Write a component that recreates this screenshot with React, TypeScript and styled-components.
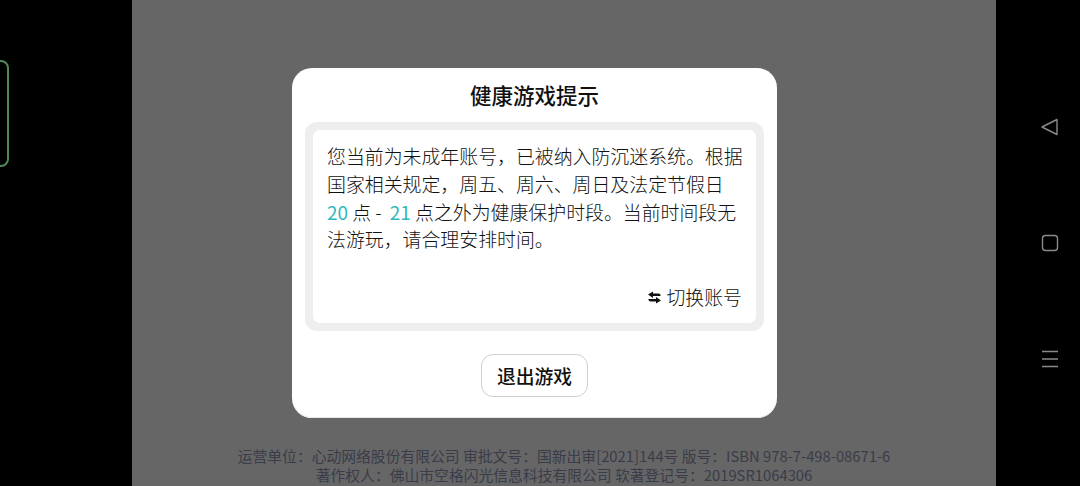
import React from 'react';
import styled, { createGlobalStyle } from 'styled-components';

const GlobalStyle = createGlobalStyle`
  html, body {
    margin: 0;
    padding: 0;
    background: #000;
    font-family: 'Noto Sans CJK SC', 'Noto Sans', sans-serif;
  }
`;

const Screen = styled.div`
  width: 1080px;
  height: 486px;
  display: flex;
  overflow: hidden;
  background: #000;
`;

const LeftRail = styled.div`
  width: 132px;
  flex-shrink: 0;
  padding-top: 60px;
  box-sizing: border-box;
  overflow: hidden;
`;

const EdgeBracket = styled.div`
  width: 19px;
  height: 107px;
  margin-left: -10px;
  box-sizing: border-box;
  border: 2px solid #4f8a55;
  border-radius: 8px;
`;

const GamePanel = styled.div`
  width: 864px;
  flex-shrink: 0;
  background: #666;
  padding-top: 68px;
  box-sizing: border-box;
`;

const Dialog = styled.div`
  width: 485px;
  height: 350px;
  margin-left: 160px;
  box-sizing: border-box;
  padding: 0 13px;
  background: #fff;
  border-radius: 20px;
  box-shadow: inset 0 -1px 1px #e6e6e6;
  display: flex;
  flex-direction: column;
  align-items: center;
`;

const Title = styled.h2`
  margin: 0;
  height: 54px;
  line-height: 54px;
  font-size: 21.5px;
  font-weight: 500;
  color: #111;
`;

const MessageFrame = styled.div`
  width: 459px;
  height: 209px;
  padding: 8px;
  box-sizing: border-box;
  background: #eeeeee;
  border-radius: 12px;
`;

const MessageCard = styled.div`
  height: 100%;
  box-sizing: border-box;
  padding: 12px 14px 12px;
  background: #fff;
  border-radius: 7px;
  display: flex;
  flex-direction: column;
  justify-content: space-between;
`;

const Message = styled.p`
  margin: 0;
  font-size: 18.9px;
  font-weight: 300;
  line-height: 27.8px;
  color: #111;
  white-space: nowrap;
`;

const Hours = styled.span`
  color: #2fb8bd;
  font-weight: 400;
`;

const SwitchAccount = styled.div`
  display: flex;
  align-items: center;
  justify-content: flex-end;
  gap: 4px;
  font-size: 18.9px;
  font-weight: 300;
  line-height: 28px;
  color: #111;
`;

const ExitButton = styled.button`
  width: 107px;
  height: 43px;
  margin-top: 23px;
  padding: 0;
  box-sizing: border-box;
  background: #fff;
  border: 1px solid #cfcfcf;
  border-radius: 12px;
  font-family: inherit;
  font-size: 18.8px;
  font-weight: 500;
  color: #111;
`;

const Footer = styled.div`
  margin-top: 28px;
  text-align: center;
  font-size: 14.8px;
  line-height: 19px;
  color: #3a3c49;
`;

const RightRail = styled.div`
  flex: 1;
  display: flex;
  flex-direction: column;
  align-items: center;
  padding: 116px 0 0 24px;
  box-sizing: border-box;
  gap: 94px;
`;

const NavIcon = styled.svg`
  width: 22px;
  height: 22px;
  fill: none;
  stroke: #8a8a8a;
  stroke-width: 1.4;
  stroke-linejoin: round;
`;

// top arrow points left, bottom arrow points right
const SwapIcon = () => (
  <svg width="15" height="15" viewBox="0 0 15 15" fill="#111">
    <path d="M1 4.6 6 1.4v2.2h5.2c1.6 0 2.4.8 2.4 2.4H6v2.1Z" />
    <path d="M14 10.4 9 13.6v-2.2H3.8C2.2 11.4 1.4 10.6 1.4 9H9V6.9Z" />
  </svg>
);

export default function App() {
  return (
    <Screen>
      <GlobalStyle />
      <LeftRail>
        <EdgeBracket />
      </LeftRail>
      <GamePanel>
        <Dialog>
          <Title>健康游戏提示</Title>
          <MessageFrame>
            <MessageCard>
              <Message>
                您当前为未成年账号，已被纳入防沉迷系统。根据
                <br />
                国家相关规定，周五、周六、周日及法定节假日
                <br />
                <Hours>20</Hours> 点 - &nbsp;<Hours>21</Hours> 点之外为健康保护时段。当前时间段无
                <br />
                法游玩，请合理安排时间。
              </Message>
              <SwitchAccount>
                <SwapIcon />
                切换账号
              </SwitchAccount>
            </MessageCard>
          </MessageFrame>
          <ExitButton>退出游戏</ExitButton>
        </Dialog>
        <Footer>
          运营单位：心动网络股份有限公司 审批文号：国新出审[2021]144号 版号：ISBN 978-7-498-08671-6
          <br />
          著作权人：佛山市空格闪光信息科技有限公司 软著登记号：2019SR1064306
        </Footer>
      </GamePanel>
      <RightRail>
        <NavIcon viewBox="0 0 22 22">
          <path d="M3 11L18 3.5V18.5Z" />
        </NavIcon>
        <NavIcon viewBox="0 0 22 22">
          <rect x="3.5" y="3.5" width="15" height="15" rx="3" />
        </NavIcon>
        <NavIcon viewBox="0 0 22 22">
          <path d="M3 3.5H19M3 11H19M3 18.5H19" />
        </NavIcon>
      </RightRail>
    </Screen>
  );
}
